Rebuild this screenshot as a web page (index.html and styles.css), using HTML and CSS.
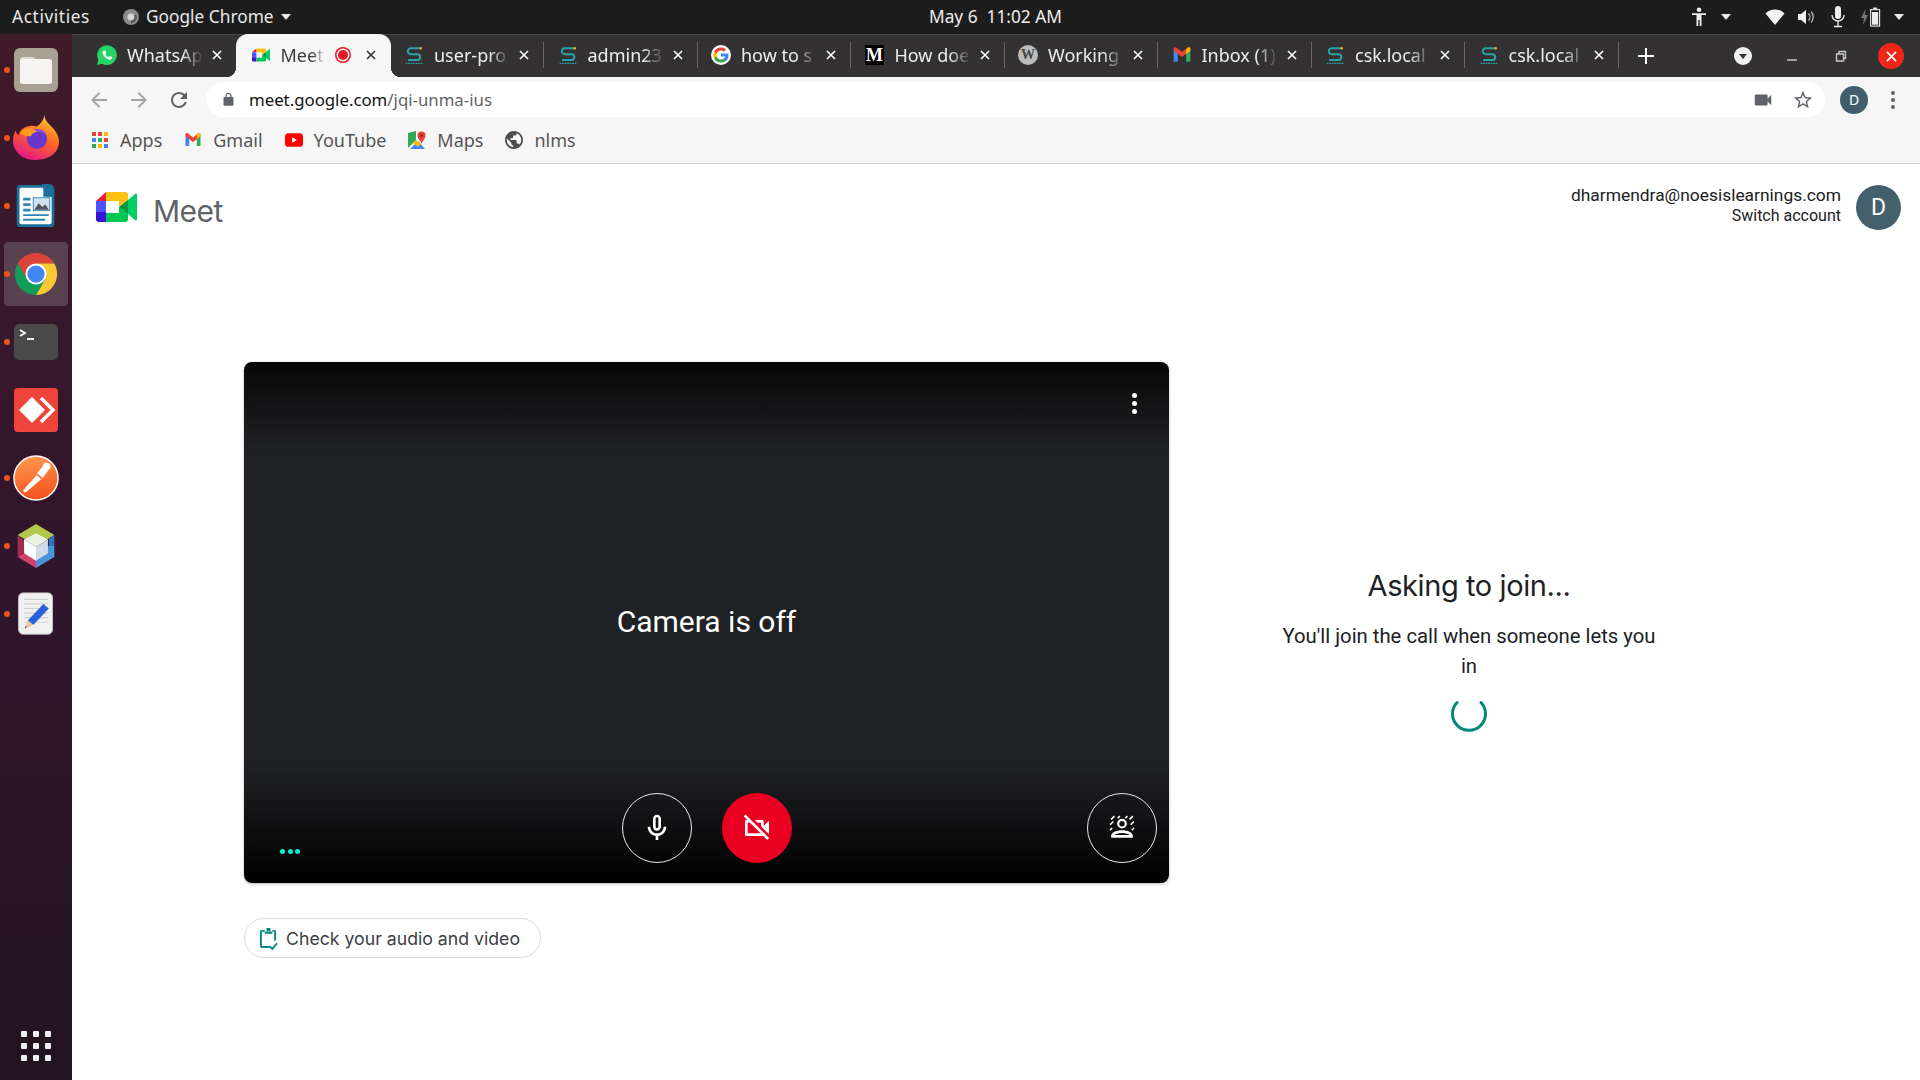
FILE: index.html
```html
<!DOCTYPE html>
<html lang="en">
<head>
    <meta charset="UTF-8">
    <title>Meet</title>
    <link rel="stylesheet" href="styles.css">
</head>
<body>
    <svg class="sprite" xmlns="http://www.w3.org/2000/svg">
        <symbol id="i-meet" viewBox="0 0 41 30">
            <path fill="#ea1f3d" d="M10 0v9H0z"/>
            <path fill="#4f52ff" d="M0 9h10v11H0z"/>
            <path fill="#3a14d6" d="M0 20h10v10H3a3 3 0 0 1-3-3z"/>
            <path fill="#ffc114" d="M10 0h19a3 3 0 0 1 3 3v6l-9 6V9H10z"/>
            <path fill="#00c853" d="M10 21h13v-6l9 6v6a3 3 0 0 1-3 3H10z"/>
            <path fill="#009a44" d="M23 15l9-7v14z"/>
            <path fill="#00d061" d="M32 8l7-6c1-.8 2-.4 2 1v24c0 1.4-1 1.8-2 1l-7-6z"/>
        </symbol>
        <symbol id="i-s" viewBox="0 0 24 24">
            <path fill="none" stroke="#2aa3a8" stroke-width="2.4" d="M19 4H8a3 3 0 0 0 0 7h8a3 3 0 0 1 0 7H5"/>
            <circle cx="20" cy="4" r="1.6" fill="#f5a623"/>
            <path stroke="#2aa3a8" stroke-width="1.4" stroke-dasharray="2 1" d="M2 22h20"/>
        </symbol>
        <symbol id="i-gmail" viewBox="0 0 24 24">
            <path fill="#4285f4" d="M2 20V6l5 4v10z"/>
            <path fill="#34a853" d="M22 20V6l-5 4v10z"/>
            <path fill="#ea4335" d="M2 4.500c0-1.500 1.800-2.300 3-1.400L12 8.500l7-5.400c1.200-.9 3-.1 3 1.400V7l-10 7.500L2 7z"/>
            <path fill="#fbbc04" d="M22 4.500V7l-5 3.700V5.500l2-2.400c1.200-.9 3-.1 3 1.400z"/>
        </symbol>
        <symbol id="i-x" viewBox="0 0 12 12">
            <path fill="none" stroke="currentColor" stroke-width="1.600" d="M2 2l8 8M10 2l-8 8"/>
        </symbol>
    </svg>

    <div class="topbar">
        <div class="topbar-left">
            <span class="activities">Activities</span>
            <svg class="app-dot" viewBox="0 0 16 16"><circle cx="8" cy="8" r="8" fill="#8c8c8c"/><circle cx="8" cy="8" r="3.500" fill="#d8d8d8"/><path fill="#5c5c5c" d="M8 11.500a3.500 3.500 0 0 0 3-5.300l2.400-.4A6.500 6.500 0 0 1 8 14.500z"/></svg>
            <span>Google Chrome</span>
            <span class="caret"></span>
        </div>
        <span class="clock">May 6&nbsp;&nbsp;11:02 AM</span>
        <div class="status">
            <svg class="st-person" viewBox="0 0 16 20"><circle cx="8" cy="2.800" r="2.300" fill="#eee"/><path fill="#eee" d="M1 6.200h14v1.800h-4.500v11H8.700v-6H7.300v6H5.500V8H1z"/></svg>
            <span class="caret st-caret1"></span>
            <svg class="st-wifi" viewBox="0 0 20 16"><path fill="#f2f2f2" d="M10 16L.5 4.500C3 2 6.300.5 10 .5s7 1.500 9.500 4z"/></svg>
            <svg class="st-speaker" viewBox="0 0 18 16"><path fill="#eee" d="M0 5h3l5-4v14l-5-4H0z"/><path fill="none" stroke="#bbb" stroke-width="1.300" d="M10.500 4.500a5 5 0 0 1 0 7M13 2.500a8 8 0 0 1 0 11"/></svg>
            <svg class="st-mic" viewBox="0 0 14 22"><rect x="4" y="0" width="6" height="13" rx="3" fill="#eee"/><path fill="none" stroke="#eee" stroke-width="1.300" d="M1 9a6 6 0 0 0 12 0M7 15v5M3 20.500h8"/></svg>
            <svg class="st-batt" viewBox="0 0 20 20"><path fill="#777" d="M4.500 2L0 11h3l-1 7 5-10H4z"/><rect x="9.600" y="2.600" width="9" height="16.500" fill="none" stroke="#ddd" stroke-width="1.200"/><rect x="12" y="0.500" width="4.200" height="2" fill="#ddd"/><rect x="11" y="5" width="6.200" height="12.700" fill="#eee"/></svg>
            <span class="caret st-caret2"></span>
        </div>
    </div>

    <div class="desktop">
        <nav class="dock">
            <div class="dock-item running">
                <svg viewBox="0 0 44 44" class="dock-icon"><rect width="44" height="44" rx="6" fill="#a7a192"/><path fill="#dfdcd2" d="M6 12a3 3 0 0 1 3-3h9c2 0 3 2 5 2v3H6z"/><rect x="6" y="11" width="32" height="25" rx="2.500" fill="#f6f5f2"/></svg>
            </div>
            <div class="dock-item running">
                <svg viewBox="0 0 48 48" class="dock-icon wide">
                    <defs><linearGradient id="ff" x1="0.800" y1="0" x2="0.300" y2="1"><stop offset="0" stop-color="#ffd52e"/><stop offset="0.450" stop-color="#ff6a1f"/><stop offset="1" stop-color="#e5178a"/></linearGradient></defs>
                    <path fill="url(#ff)" d="M33 0c0 5 3 8 7 12 5 5 8 10 8 16 0 11-10 19-24 19S0 38 0 27c0-4 1-8 3-11 0 3 1 4 3 5 1-5 5-8 9-9 3-1 7-1 10 0 4-3 7-7 8-12z"/>
                    <circle cx="25" cy="25" r="10.500" fill="#6a35c9"/>
                    <path fill="#8a4fe0" d="M18 17a11 11 0 0 1 17 4c-4-3-11-4-17-4z"/>
                    <path fill="#ff9a1f" d="M7 19c3-4 8-6 12-5 3 1 5 2 6 4-4 0-6 2-6 4-4 1-8-1-12-3z"/>
                </svg>
            </div>
            <div class="dock-item running">
                <svg viewBox="0 0 44 48" class="dock-icon">
                    <path fill="#1b6f9c" d="M5 1h25l12 12v30a4 4 0 0 1-4 4H5a4 4 0 0 1-4-4V5a4 4 0 0 1 4-4z"/>
                    <path fill="#fff" d="M6 4h24v10h9v28a2 2 0 0 1-2 2H6a2 2 0 0 1-2-2V6a2 2 0 0 1 2-2z"/>
                    <path fill="#1b6f9c" d="M28 0h8a6 6 0 0 1 6 6v8H34z"/>
                    <path fill="#2c86b6" d="M8 15h8v3H8zM8 21h8v3H8zM8 27h8v3H8zM8 33h28v2H8zM8 38h24v2H8z"/>
                    <rect x="19" y="15" width="18" height="14" fill="#cfe3ee" stroke="#2c86b6"/>
                    <path fill="#555" d="M20 28l5-7 4 4 3-3 4 6z"/>
                </svg>
            </div>
            <div class="dock-item running active">
                <svg viewBox="0 0 48 48" class="dock-icon wide">
                    <path fill="#db4437" d="M4.950 13A22 22 0 0 1 43.050 13H24L14.470 29.500z"/>
                    <path fill="#fcc934" d="M43.050 13A22 22 0 0 1 24 46L33.530 29.500 24 13z"/>
                    <path fill="#0f9d58" d="M24 46A22 22 0 0 1 4.950 13L14.470 29.500H33.530z"/>
                    <circle cx="24" cy="24" r="11" fill="#fff"/>
                    <circle cx="24" cy="24" r="9" fill="#4285f4"/>
                </svg>
            </div>
            <div class="dock-item running">
                <svg viewBox="0 0 44 36" class="dock-icon term"><rect width="44" height="36" rx="5" fill="#4a4a4a"/><path fill="none" stroke="#fff" stroke-width="1.800" d="M6 6l5 3-5 3"/><path stroke="#fff" stroke-width="1.800" d="M13 15h7"/></svg>
            </div>
            <div class="dock-item">
                <svg viewBox="0 0 44 44" class="dock-icon"><rect width="44" height="44" rx="4" fill="#ef443b"/><path fill="#fff" d="M18 9l13 13-13 13L5 22z"/><path fill="none" stroke="#fff" stroke-width="3.500" d="M27 10l12 12-12 12"/></svg>
            </div>
            <div class="dock-item running">
                <svg viewBox="0 0 48 48" class="dock-icon wide">
                    <defs><linearGradient id="pm" x1="0.300" y1="0" x2="0.500" y2="1"><stop offset="0" stop-color="#ff9a4d"/><stop offset="1" stop-color="#f4511e"/></linearGradient></defs>
                    <circle cx="24" cy="24" r="23" fill="url(#pm)" stroke="#fff" stroke-width="1.500"/>
                    <path fill="#fff" d="M12 39l-1.500-2 14-16 5 4-15 13z"/>
                    <path fill="#fff" d="M25 19l7-8 5 5-6 8z"/>
                    <circle cx="35" cy="12" r="4" fill="#fff"/>
                </svg>
            </div>
            <div class="dock-item running">
                <svg viewBox="0 0 44 48" class="dock-icon">
                    <path fill="#b2c94d" d="M22 0l20 12-10 6-10-6-10 6L2 12z"/>
                    <path fill="#3272bd" d="M42 12v12l-6 2v-10z"/>
                    <path fill="#4b94dc" d="M42 24v12L22 48V38l10-6v-8z"/>
                    <path fill="#a12d4c" d="M2 12v24l7-4V18z"/>
                    <path fill="#d33f6c" d="M2 36l20 12V38L9 32z"/>
                    <path fill="#eef2e2" d="M22 10l13 7-13 8-13-8z"/>
                    <path fill="#fff" d="M9 17l13 8v15l-13-8z"/>
                    <path fill="#cfdbe5" d="M35 17l-13 8v15l13-8z"/>
                </svg>
            </div>
            <div class="dock-item running">
                <svg viewBox="0 0 44 48" class="dock-icon">
                    <rect x="3" y="1" width="37" height="45" rx="5" fill="#f1f1f1" stroke="#c8c8c8"/>
                    <path stroke="#d0d0d0" stroke-width="1.200" d="M9 8h26M9 13h26M9 18h26M9 23h26M9 28h26M9 33h26"/>
                    <path fill="#2a63d8" d="M30 13l6 5-17 18-6-5z"/>
                    <path fill="#f0c9a0" d="M13 31l6 5-9 4z"/>
                    <path fill="#333" d="M12 38l-2 2 .500-3z"/>
                </svg>
            </div>
            <div class="dock-apps">
                <i></i><i></i><i></i><i></i><i></i><i></i><i></i><i></i><i></i>
            </div>
        </nav>

        <div class="browser">
            <div class="tabstrip">
                <div class="tab">
                    <svg class="fav" viewBox="0 0 24 24"><path fill="#25d366" d="M0 24l1.700-6.200A11.800 11.800 0 1 1 6.300 22.400z"/><path fill="#fff" d="M8.500 6.500c-.8 0-1.800 1-1.800 2.700 0 3 4.400 8 8.500 8.300 1.800.1 3-1.200 3-2.300l-.2-.8-2.500-1.200-1.300 1.500c-2-.7-3.600-2.200-4.300-4l1.200-1.300-1-2.700z"/></svg>
                    <span class="tab-title">WhatsAp</span>
                    <svg class="tab-x"><use href="#i-x"/></svg>
                </div>
                <div class="tab tab-active">
                    <svg class="fav fav-meet"><use href="#i-meet"/></svg>
                    <span class="tab-title short">Meet</span>
                    <span class="rec"></span>
                    <svg class="tab-x"><use href="#i-x"/></svg>
                </div>
                <div class="tab sep">
                    <svg class="fav"><use href="#i-s"/></svg>
                    <span class="tab-title">user-pro</span>
                    <svg class="tab-x"><use href="#i-x"/></svg>
                </div>
                <div class="tab sep">
                    <svg class="fav"><use href="#i-s"/></svg>
                    <span class="tab-title">admin23</span>
                    <svg class="tab-x"><use href="#i-x"/></svg>
                </div>
                <div class="tab sep">
                    <svg class="fav" viewBox="0 0 24 24"><circle cx="12" cy="12" r="12" fill="#fff"/><path fill="#4285f4" d="M21 12.200c0-.7-.1-1.300-.2-1.900H12v3.600h5a4.300 4.300 0 0 1-1.800 2.800v2.300h3C20 17.300 21 15 21 12.200z"/><path fill="#34a853" d="M12 21c2.500 0 4.500-.8 6.100-2.100l-3-2.300c-.8.600-1.900.9-3.100.9-2.400 0-4.400-1.600-5.100-3.800H3.800v2.400A9 9 0 0 0 12 21z"/><path fill="#fbbc05" d="M6.900 13.700a5.400 5.400 0 0 1 0-3.400V7.900H3.800a9 9 0 0 0 0 8.200z"/><path fill="#ea4335" d="M12 6.600c1.300 0 2.500.5 3.500 1.400l2.600-2.600A9 9 0 0 0 3.800 7.900l3.100 2.400C7.600 8.200 9.600 6.600 12 6.600z"/></svg>
                    <span class="tab-title">how to s</span>
                    <svg class="tab-x"><use href="#i-x"/></svg>
                </div>
                <div class="tab sep">
                    <span class="fav fav-medium">M</span>
                    <span class="tab-title">How doe</span>
                    <svg class="tab-x"><use href="#i-x"/></svg>
                </div>
                <div class="tab sep">
                    <span class="fav fav-wp">W</span>
                    <span class="tab-title">Working</span>
                    <svg class="tab-x"><use href="#i-x"/></svg>
                </div>
                <div class="tab sep">
                    <svg class="fav"><use href="#i-gmail"/></svg>
                    <span class="tab-title">Inbox (1)</span>
                    <svg class="tab-x"><use href="#i-x"/></svg>
                </div>
                <div class="tab sep">
                    <svg class="fav"><use href="#i-s"/></svg>
                    <span class="tab-title">csk.local</span>
                    <svg class="tab-x"><use href="#i-x"/></svg>
                </div>
                <div class="tab sep">
                    <svg class="fav"><use href="#i-s"/></svg>
                    <span class="tab-title">csk.local</span>
                    <svg class="tab-x"><use href="#i-x"/></svg>
                </div>
                <svg class="new-tab" viewBox="0 0 16 16"><path fill="none" stroke="#fff" stroke-width="2" d="M8 0v16M0 8h16"/></svg>
                <div class="win-btns">
                    <svg class="win-btn" viewBox="0 0 18 18"><circle cx="9" cy="9" r="9" fill="#f1f1f1"/><path fill="#333" d="M5 7h8l-4 5z"/></svg>
                    <svg class="win-btn" viewBox="0 0 18 18"><path stroke="#ccc" stroke-width="1.400" d="M4 13h10"/></svg>
                    <svg class="win-btn" viewBox="0 0 18 18"><path fill="none" stroke="#ccc" stroke-width="1.300" d="M4.500 7h7v7h-7zM7 7V4.500h6.500v7H11.500"/></svg>
                    <span class="win-close"><svg viewBox="0 0 12 12"><path fill="none" stroke="#fff" stroke-width="1.800" d="M1 1l10 10M11 1L1 11"/></svg></span>
                </div>
            </div>

            <div class="toolbar">
                <svg class="tb-icon dim" viewBox="0 0 24 24"><path d="M20 11H7.830l5.590-5.590L12 4l-8 8 8 8 1.410-1.410L7.830 13H20v-2z"/></svg>
                <svg class="tb-icon dim" viewBox="0 0 24 24"><path d="M4 11h12.170l-5.590-5.590L12 4l8 8-8 8-1.410-1.410L16.170 13H4v-2z"/></svg>
                <svg class="tb-icon" viewBox="0 0 24 24"><path d="M17.650 6.350C16.200 4.900 14.210 4 12 4c-4.420 0-7.990 3.580-7.990 8s3.570 8 7.990 8c3.730 0 6.840-2.550 7.730-6h-2.080c-.82 2.330-3.040 4-5.650 4-3.310 0-6-2.690-6-6s2.690-6 6-6c1.660 0 3.140.69 4.220 1.780L13 11h7V4l-2.350 2.350z"/></svg>
                <div class="omnibox">
                    <svg class="lock" viewBox="0 0 24 24"><path d="M18 8h-1V6c0-2.760-2.240-5-5-5S7 3.240 7 6v2H6c-1.100 0-2 .9-2 2v10c0 1.100.9 2 2 2h12c1.100 0 2-.9 2-2V10c0-1.100-.9-2-2-2zM9 8V6c0-1.660 1.340-3 3-3s3 1.340 3 3v2H9z"/></svg>
                    <span class="url">meet.google.com<span class="url-path">/jqi-unma-ius</span></span>
                    <svg class="omni-cam" viewBox="0 0 24 24"><path d="M17 10.500V7c0-.55-.45-1-1-1H4c-.55 0-1 .45-1 1v10c0 .55.45 1 1 1h12c.55 0 1-.45 1-1v-3.500l4 4v-11l-4 4z"/></svg>
                    <svg class="omni-star" viewBox="0 0 24 24"><path d="M22 9.240l-7.190-.62L12 2 9.190 8.630 2 9.240l5.460 4.730L5.820 21 12 17.270 18.180 21l-1.630-7.030L22 9.240zM12 15.400l-3.760 2.270 1-4.280-3.320-2.880 4.380-.38L12 6.100l1.710 4.040 4.380.38-3.320 2.880 1 4.280L12 15.400z"/></svg>
                </div>
                <span class="profile">D</span>
                <span class="chrome-menu"><i></i><i></i><i></i></span>
            </div>

            <div class="bookmarks">
                <span class="bm">
                    <svg class="bm-icon bm-apps" viewBox="0 0 16 16">
                        <path fill="#ea4335" d="M0 0h4v4H0zM6 0h4v4H6z"/><path fill="#fbbc05" d="M12 0h4v4h-4z"/>
                        <path fill="#4285f4" d="M0 6h4v4H0z"/><path fill="#34a853" d="M6 6h4v4H6z"/><path fill="#ea4335" d="M12 6h4v4h-4z"/>
                        <path fill="#34a853" d="M0 12h4v4H0z"/><path fill="#fbbc05" d="M6 12h4v4H6z"/><path fill="#4285f4" d="M12 12h4v4h-4z"/>
                    </svg>Apps</span>
                <span class="bm"><svg class="bm-icon"><use href="#i-gmail"/></svg>Gmail</span>
                <span class="bm"><svg class="bm-icon" viewBox="0 0 20 16"><rect width="20" height="15" y="0.500" rx="4" fill="#f00"/><path fill="#fff" d="M8 5l5.200 3L8 11z"/></svg>YouTube</span>
                <span class="bm"><svg class="bm-icon" viewBox="0 0 18 18"><path fill="#34a853" d="M0 2l8-2v9L0 17z"/><path fill="#4285f4" d="M2 18l8-8 7 8z"/><path fill="#fbbc05" d="M8 9l5 4-3 3-5-4z"/><circle cx="13.500" cy="4.500" r="4" fill="#ea4335"/><path fill="#ea4335" d="M10 6.500h7l-3.500 6z"/><circle cx="13.500" cy="4.500" r="1.500" fill="#a51c12"/></svg>Maps</span>
                <span class="bm"><svg class="bm-icon" viewBox="2 2 20 20"><path fill="#4d4d4d" d="M12 2C6.480 2 2 6.480 2 12s4.480 10 10 10 10-4.480 10-10S17.520 2 12 2zm-1 17.930c-3.950-.49-7-3.850-7-7.930 0-.62.08-1.210.21-1.790L9 15v1c0 1.100.9 2 2 2v1.930zm6.900-2.540c-.26-.81-1-1.390-1.900-1.390h-1v-3c0-.55-.45-1-1-1H8v-2h2c.55 0 1-.45 1-1V7h2c1.100 0 2-.9 2-2v-.41c2.930 1.190 5 4.060 5 7.410 0 2.080-.8 3.970-2.100 5.390z"/></svg>nlms</span>
            </div>

            <main class="page">
                <header class="meet-head">
                    <div class="brand">
                        <svg class="brand-logo"><use href="#i-meet"/></svg>
                        <span class="brand-name">Meet</span>
                    </div>
                    <div class="account">
                        <div class="account-text">
                            <div class="account-mail">dharmendra@noesislearnings.com</div>
                            <div class="account-switch">Switch account</div>
                        </div>
                        <span class="account-avatar">D</span>
                    </div>
                </header>

                <section class="join-row">
                    <div class="preview-col">
                        <div class="preview">
                            <span class="preview-more"><i></i><i></i><i></i></span>
                            <span class="preview-msg">Camera is off</span>
                            <span class="level-dots"><i></i><i></i><i></i></span>
                            <span class="round-btn btn-mic">
                                <svg viewBox="0 0 24 24"><path d="M12 14c1.660 0 3-1.340 3-3V5c0-1.660-1.340-3-3-3S9 3.340 9 5v6c0 1.660 1.340 3 3 3zm-1-9c0-.55.45-1 1-1s1 .45 1 1v6c0 .55-.45 1-1 1s-1-.45-1-1V5zm6 6c0 2.760-2.240 5-5 5s-5-2.240-5-5H5c0 3.530 2.610 6.430 6 6.920V21h2v-3.080c3.390-.49 6-3.390 6-6.920h-2z"/></svg>
                            </span>
                            <span class="round-btn btn-cam">
                                <svg viewBox="0 0 24 24"><path d="M9.560 8l-2-2-4.150-4.140L2 3.270 4.730 6H4c-.55 0-1 .45-1 1v10c0 .55.45 1 1 1h12c.21 0 .39-.08.55-.18L19.730 21l1.410-1.410-8.860-8.860L9.560 8zM5 16V8h1.730l8 8H5zm10-8v2.610l6 6V6.500l-4 4V7c0-.55-.45-1-1-1h-5.610l2 2H15z"/></svg>
                            </span>
                            <span class="round-btn btn-fx">
                                <svg viewBox="0 0 24 24">
                                    <path fill="none" stroke="#fff" stroke-width="1.500" d="M2 4l3-3M8 3l2-2M15 3l2-2M19 4l3-3M1 9l3-3M20 9l3-3M1 14l2-2M21 14l2-2"/>
                                    <circle cx="12" cy="8" r="3.500" fill="none" stroke="#fff" stroke-width="2"/>
                                    <path fill="#fff" d="M2 21v-2c0-3 5-5 10-5s10 2 10 5v2zm3-2.500h14c-.8-1-3.500-2-7-2s-6.200 1-7 2z"/>
                                </svg>
                            </span>
                        </div>
                        <button class="check-btn">
                            <svg viewBox="0 0 20 24"><path fill="none" stroke="#00897b" stroke-width="2" d="M11 21H3a1 1 0 0 1-1-1V5a1 1 0 0 1 1-1h3M14 4h2a1 1 0 0 1 1 1v9"/><path fill="#00897b" d="M6 4.500h8V7H6zM8 1h4v3H8z"/><path fill="none" stroke="#00897b" stroke-width="2" d="M11 20l3 3 5-6"/></svg>
                            Check your audio and video
                        </button>
                    </div>
                    <div class="join-panel">
                        <h1 class="join-title">Asking to join...</h1>
                        <p class="join-text">You'll join the call when someone lets you in</p>
                        <svg class="spinner" viewBox="0 0 36 36"><path fill="none" stroke="#00897b" stroke-width="3" stroke-linecap="round" d="M6 6.500A16.500 16.500 0 1 0 30 6.500"/></svg>
                    </div>
                </section>
            </main>
        </div>
    </div>
</body>
</html>
```

FILE: styles.css
```css
html,body{
    margin:0; padding:0; height:100%;
}
body{
    display:flex; flex-direction:column; height:1080px; overflow:hidden;
    font-family:"Noto Sans","Liberation Sans",sans-serif; background:#fff;
}
.sprite{
    display:block; width:0; height:0;
}

/* gnome top bar */
.topbar{
    height:34px; flex:none; display:flex; align-items:center; background:#1c1c1c; color:#e8e8e8;
    font-size:17.3px; padding:0 0 1px 12px; box-sizing:border-box;
}
.topbar-left{
    display:flex; align-items:center; width:917px;
}
.activities{
    width:99px; letter-spacing:.6px;
}
.app-dot{
    width:16px; height:16px; margin-left:12px; margin-right:7px;
}
.app-dot + span{
    width:127px; white-space:nowrap;
}
.caret{
    display:block; width:0; height:0; border-left:5px solid transparent; border-right:5px solid transparent;
    border-top:6px solid #e8e8e8;
}
.topbar-left .caret{
    margin-left:8px;
}
.clock{
    white-space:nowrap; color:#eee;
}
.status{
    display:flex; align-items:center; margin-left:auto;
}
.status svg{
    flex:none; display:block;
}
.st-person{
    width:16px; height:20px;
}
.st-caret1{
    margin-left:14px;
}
.st-wifi{
    width:20px; height:16px; margin-left:34px;
}
.st-speaker{
    width:18px; height:16px; margin-left:13px;
}
.st-mic{
    width:14px; height:22px; margin-left:15px;
}
.st-batt{
    width:20px; height:20px; margin-left:16px;
}
.st-caret2{
    margin-left:13px; margin-right:16px;
}

.desktop{
    flex:1; display:flex; min-height:0;
}

/* ubuntu dock */
.dock{
    width:72px; flex:none; display:flex; flex-direction:column; align-items:center; padding-top:4px; box-sizing:border-box;
    background:linear-gradient(to bottom,#3f1a29 0,#36172c 350px,#2f152c 600px,#22141f 100%);
}
.dock-item{
    width:64px; height:64px; margin-bottom:4px; flex:none; position:relative;
    display:flex; align-items:center; justify-content:center; border-radius:4px;
}
.dock-item.active{
    background:#5a4150;
}
.dock-item.running::before{
    content:""; position:absolute; left:0; top:29px; width:6px; height:6px; border-radius:50%; background:#e95420;
}
.dock-icon{
    width:44px; height:44px; display:block;
}
.dock-icon.wide{
    width:46px; height:46px;
}
.dock-icon.term{
    height:36px;
}
.dock-apps{
    margin-top:auto; margin-bottom:19px; display:grid; grid-template-columns:repeat(3,6px); gap:6px;
}
.dock-apps i{
    display:block; width:6px; height:6px; background:#eee; border-radius:1px;
}

.browser{
    flex:1; min-width:0; display:flex; flex-direction:column;
}

/* chrome tabs */
.tabstrip{
    height:43px; flex:none; display:flex; align-items:stretch; background:#333132; padding-left:10.5px;
    border-top:1px solid #444; box-sizing:border-box; color:#eee;
}
.tab{
    width:153.5px; flex:none; display:flex; align-items:center; padding:0 0 2px 14.5px; box-sizing:border-box;
    font-size:18px; position:relative;
}
.fav{
    width:20px; height:20px; flex:none; display:block;
}
.fav-meet{
    width:18px; height:18px; margin:0 1px;
}
.fav-medium{
    width:19px; height:20px; margin:0 .5px; background:#000; color:#fff; text-align:center;
    font:bold 18px/20px "Liberation Serif",serif;
}
.fav-wp{
    background:#bbb; border-radius:50%; color:#444; text-align:center;
    font:bold 14px/20px "Liberation Serif",serif;
}
.tab-title{
    width:78px; margin-left:10px; white-space:nowrap; overflow:hidden; flex:none;
    -webkit-mask-image:linear-gradient(to right,#000 70%,transparent 98%);
    mask-image:linear-gradient(to right,#000 70%,transparent 98%);
}
.tab-title.short{
    width:45px;
}
.tab-x{
    width:12px; height:12px; margin-left:6px; flex:none; color:#fff;
}
.tab.sep::after{
    content:""; width:1px; height:26px; background:#666; margin-left:auto; margin-right:-1px;
}
.tab-active{
    width:155px; margin-right:-1.5px; background:#f6f6f6; color:#3c3c3c; border-radius:12px 12px 0 0; margin-top:-1px;
}
.tab-active .tab-x{
    color:#333; margin-left:17px;
}
.tab-active::before,.tab-active::after{
    content:""; position:absolute; bottom:0; width:10px; height:10px;
}
.tab-active::before{
    left:-10px; background:radial-gradient(circle at 0 0,transparent 10px,#f6f6f6 10.5px);
}
.tab-active::after{
    right:-10px; background:radial-gradient(circle at 100% 0,transparent 10px,#f6f6f6 10.5px);
}
.rec{
    width:10px; height:10px; flex:none; margin-left:12px; background:#e5192b; border-radius:50%;
    box-shadow:0 0 0 1.5px #f6f6f6,0 0 0 3px #e5192b;
}
.new-tab{
    width:16px; height:16px; flex:none; align-self:center; margin-left:20px;
}
.win-btns{
    margin-left:auto; display:flex; align-items:center; gap:31px; padding-right:16px;
}
.win-btn{
    width:18px; height:18px; display:block;
}
.win-close{
    width:26px; height:26px; margin-left:-3px; border-radius:50%; background:#f1261a; display:flex; align-items:center; justify-content:center;
}
.win-close svg{
    width:11px; height:11px;
}

/* address bar */
.toolbar{
    height:45px; flex:none; display:flex; align-items:center; background:#f6f6f6; padding-left:15px; gap:16px; box-sizing:border-box;
}
.tb-icon{
    width:24px; height:24px; flex:none; fill:#5f6368;
}
.tb-icon.dim{
    fill:#a5a5a5;
}
.omnibox{
    width:1619px; height:35px; margin-left:-1px; flex:none; background:#fff; border-radius:18px; display:flex; align-items:center;
    padding:0 11px 0 15px; box-sizing:border-box;
}
.lock{
    width:15px; height:15px; flex:none; fill:#5f6368;
}
.url{
    margin-left:13px; font-size:16.8px; color:#111; white-space:nowrap;
}
.url-path{
    color:#5f6368;
}
.omni-cam{
    width:22px; height:22px; margin-left:auto; fill:#5f6368;
}
.omni-star{
    width:22px; height:22px; margin-left:18px; fill:#5f6368;
}
.profile{
    width:28px; height:28px; flex:none; margin-left:-1px; border-radius:50%; background:#3f5d6b; color:#fff;
    font-size:14px; line-height:28px; text-align:center;
}
.chrome-menu{
    display:flex; flex-direction:column; gap:3px; margin-left:7px;
}
.chrome-menu i{
    display:block; width:4px; height:4px; border-radius:50%; background:#5f6368;
}

/* bookmarks */
.bookmarks{
    height:42px; flex:none; display:flex; align-items:center; gap:22px; padding:0 0 6px 19px; background:#f6f6f6;
    border-bottom:1px solid #c8c8c8; box-sizing:border-box; font-size:18px; color:#555;
}
.bm{
    display:flex; align-items:center; gap:11px;
}
.bm-icon{
    width:18px; height:18px; flex:none;
}
.bm-apps{
    width:16px; height:16px; margin:0 1px;
}

/* meet page */
.page{
    flex:1; min-height:0; background:#fff;
}
.meet-head{
    height:86px; display:flex; align-items:center; justify-content:space-between; padding:0 19px 0 24px;
}
.brand{
    display:flex; align-items:center;
}
.brand-logo{
    width:41px; height:30px;
}
.brand-name{
    margin-left:16px; padding-top:8px; font:400 30px "Inter","Open Sans",sans-serif; letter-spacing:-0.5px; color:#5f6368;
}
.account{
    display:flex; align-items:center;
}
.account-text{
    text-align:right; font-family:Roboto,"Liberation Sans",sans-serif; color:#202124;
}
.account-mail{
    font-size:17.4px; line-height:20px; margin-top:-3px;
}
.account-switch{
    font-size:16px; line-height:20px; margin-top:1px;
}
.account-avatar{
    width:45px; height:45px; margin-left:15px; border-radius:50%; background:#43606b; color:#fff;
    font:400 23px/45px Roboto,sans-serif; text-align:center;
}
.join-row{
    display:flex; padding:112px 0 0 172px;
}
.preview-col{
    width:925px; flex:none;
}
.preview{
    height:521px; position:relative; border-radius:8px; display:flex; align-items:center; justify-content:center;
    background:linear-gradient(to bottom,#070707 0,#202124 90px,#202124 400px,#000 100%);
    box-shadow:0 1px 3px rgba(60,64,67,.35);
}
.preview-msg{
    font:400 30px Roboto,sans-serif; color:#fff; margin-top:-2px;
}
.preview-more{
    position:absolute; right:32px; top:31px; display:flex; flex-direction:column; gap:3px;
}
.preview-more i{
    display:block; width:5px; height:5px; border-radius:50%; background:#fff;
}
.level-dots{
    position:absolute; left:36px; bottom:29px; display:flex; gap:2.5px;
}
.level-dots i{
    display:block; width:5px; height:5px; border-radius:50%; background:#00f5d4;
}
.round-btn{
    position:absolute; bottom:20px; width:70px; height:70px; box-sizing:border-box; border-radius:50%;
    display:flex; align-items:center; justify-content:center; border:1px solid #e8eaed;
}
.round-btn svg{
    width:32px; height:32px; fill:#fff;
}
.btn-mic{
    left:378px;
}
.btn-cam{
    left:478px; background:#ea0020; border:none;
}
.btn-fx{
    right:12px;
}
.btn-fx svg{
    width:26px; height:26px;
}
.check-btn{
    margin-top:35px; width:297px; height:40px; padding:0 0 0 14px; display:flex; align-items:center; gap:8px;
    background:#fff; border:1px solid #dadce0; border-radius:20px; box-sizing:border-box;
    font:400 17.7px Inter,Roboto,sans-serif; color:#3c4043; white-space:nowrap;
}
.check-btn svg{
    width:19px; height:23px; flex:none;
}
.join-panel{
    width:380px; margin:206px 0 0 110px; flex:none; display:flex; flex-direction:column; align-items:center; text-align:center;
}
.join-title{
    margin:0; font:400 29px/36px "Inter",Roboto,sans-serif; letter-spacing:-0.4px; color:#202124;
}
.join-text{
    margin:17px 0 0; font:400 20.3px/30px Roboto,sans-serif; color:#202124;
}
.spinner{
    width:36px; height:36px; margin-top:15px;
}
```
